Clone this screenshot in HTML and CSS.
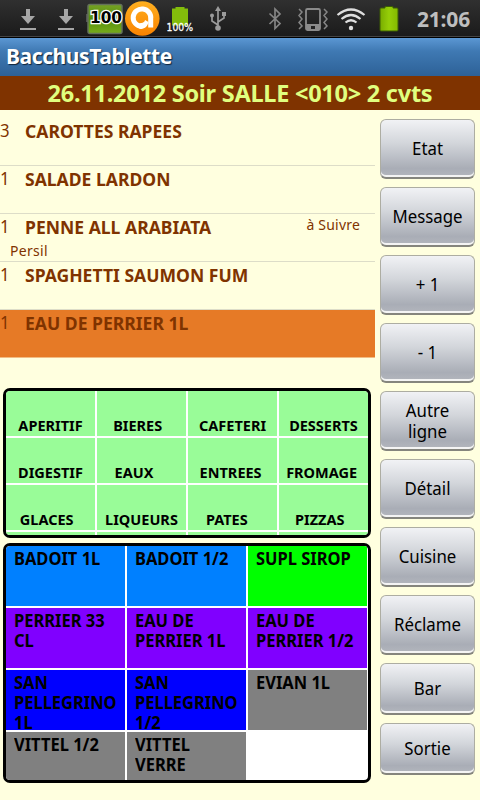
FILE: index.html
```
<!DOCTYPE html>
<html lang="fr">
<head>
    <meta charset="UTF-8">
    <meta name="viewport" content="width=device-width, initial-scale=1.0">
    <title>BacchusTablette</title>
    <link rel="stylesheet" href="styles.css">
</head>
<body>
    <div class="status-bar">
        <svg class="download-icon" width="38" height="36" viewBox="9 0 38 36">
            <path d="M26 9h4v7h5l-7 8-7-8h5z" fill="#a6a6a6"/>
            <path d="M20 28h16v2H20z" fill="#a6a6a6"/>
        </svg>
        <svg class="download-icon" width="38" height="36" viewBox="9 0 38 36">
            <path d="M26 9h4v7h5l-7 8-7-8h5z" fill="#a6a6a6"/>
            <path d="M20 28h16v2H20z" fill="#a6a6a6"/>
        </svg>
        <svg class="level-icon" width="38" height="36" viewBox="85 0 38 36">
            <defs>
                <linearGradient id="levelFill" x1="0" y1="0" x2="0" y2="1">
                    <stop offset="0" stop-color="#76a324"/>
                    <stop offset="0.5" stop-color="#558c0a"/>
                    <stop offset="1" stop-color="#78ac1c"/>
                </linearGradient>
            </defs>
            <path d="M86 14h2v8h-2z" fill="#555"/>
            <rect x="88" y="4.5" width="34" height="29" rx="2" fill="url(#levelFill)" stroke="#64715a" stroke-width="1.5"/>
            <text class="level-text" x="90" y="23" textLength="32" lengthAdjust="spacingAndGlyphs">100</text>
        </svg>
        <svg class="antivirus-icon" width="38" height="36" viewBox="123 0 38 36">
            <defs>
                <linearGradient id="orangeFill" x1="0" y1="0" x2="0" y2="1">
                    <stop offset="0" stop-color="#ffb020"/>
                    <stop offset="1" stop-color="#f98200"/>
                </linearGradient>
            </defs>
            <circle cx="142.3" cy="18.5" r="17.3" fill="url(#orangeFill)"/>
            <path d="M141.5 26.5A8.8 8.8 0 1 1 150.7 19v8.500" fill="none" stroke="#fff" stroke-width="5"/>
            <path d="M141.3 29a3 3 0 0 1 0-6c2-.2 3.5-1.3 3.7-3l3.5 2c-.8 4-3.5 6.700-7.2 7z" fill="#fff"/>
        </svg>
        <svg class="charge-icon" width="38" height="36" viewBox="161 0 38 36">
            <path d="M172 8.5h3.500V7h9v1.500h3.500v17h-16z" fill="#83bd0b"/>
            <text class="charge-text" x="166.5" y="31" textLength="26.5" lengthAdjust="spacingAndGlyphs">100%</text>
        </svg>
        <svg class="usb-icon" width="38" height="36" viewBox="199 0 38 36">
            <path d="M218 9v18M218 25l-6-4v-5M218 22l6-4v-4" fill="none" stroke="#9b9b9b" stroke-width="1.7"/>
            <path d="M218 6l3 5h-6z" fill="#9b9b9b"/>
            <circle cx="218" cy="28" r="2.8" fill="#9b9b9b"/>
            <circle cx="212" cy="15.5" r="2" fill="#9b9b9b"/>
            <path d="M222 12h4v4h-4z" fill="#9b9b9b"/>
        </svg>
        <span class="status-spacer"></span>
        <svg class="bluetooth-icon" width="32" height="36" viewBox="261 0 32 36">
            <path d="M269.5 13.5l10.5 10-5 5V9l5 5-10.5 10" fill="none" stroke="#858585" stroke-width="1.7"/>
        </svg>
        <svg class="vibrate-icon" width="42" height="36" viewBox="293 0 42 36">
            <rect x="306" y="9" width="14" height="21" rx="1.5" fill="none" stroke="#8b8b8b" stroke-width="1.8"/>
            <path d="M306 24h14v6h-14z" fill="#8b8b8b"/>
            <path d="M311 26h4v3h-4z" fill="#222"/>
            <path d="M299 9l3 3-3 3.5 3 3.5-3 3.5 3 3.5-3 3M324 9l3 3-3 3.5 3 3.5-3 3.5 3 3.5-3 3" fill="none" stroke="#858585" stroke-width="1.5"/>
        </svg>
        <svg class="wifi-icon" width="36" height="36" viewBox="335 0 36 36">
            <g fill="none" stroke="#dedede" stroke-width="2.2">
                <path d="M337.5 15q13.5-11 27 0"/>
                <path d="M341.5 19q9.5-8 19 0"/>
                <path d="M345.5 22.5q5.5-4.5 11 0"/>
            </g>
            <circle cx="351" cy="28" r="2.2" fill="#dedede"/>
        </svg>
        <svg class="battery-icon" width="38" height="36" viewBox="371 0 38 36">
            <defs>
                <linearGradient id="batteryFill" x1="0" y1="0" x2="1" y2="0">
                    <stop offset="0" stop-color="#79ad00"/>
                    <stop offset="0.5" stop-color="#96ce08"/>
                    <stop offset="1" stop-color="#83b900"/>
                </linearGradient>
            </defs>
            <path d="M381 8h4V6.500h8V8h4q1 0 1 1v21q0 1-1 1h-16q-1 0-1-1V9q0-1 1-1z" fill="url(#batteryFill)" stroke="#3c5c05" stroke-width="1"/>
        </svg>
        <span class="clock">21:06</span>
    </div>

    <header class="title-bar">
        <h1 class="app-title">BacchusTablette</h1>
    </header>
    <div class="table-banner">26.11.2012 Soir SALLE &lt;010&gt; 2 cvts</div>

    <main class="main-content">
        <section class="order-panel">
            <ul class="order-list">
                <li class="order-row">
                    <div class="order-line"><span class="order-qty">3</span><span class="order-name">CAROTTES RAPEES</span></div>
                </li>
                <li class="order-row">
                    <div class="order-line"><span class="order-qty">1</span><span class="order-name">SALADE LARDON</span></div>
                </li>
                <li class="order-row">
                    <div class="order-line"><span class="order-qty">1</span><span class="order-name">PENNE ALL ARABIATA</span><span class="order-status">à Suivre</span></div>
                    <div class="order-comment">Persil</div>
                </li>
                <li class="order-row">
                    <div class="order-line"><span class="order-qty">1</span><span class="order-name">SPAGHETTI SAUMON FUM</span></div>
                </li>
                <li class="order-row selected">
                    <div class="order-line"><span class="order-qty">1</span><span class="order-name">EAU DE PERRIER 1L</span></div>
                </li>
            </ul>

            <!-- family names are padded to 8 characters -->
            <div class="family-grid">
                <div class="family">APERITIF</div>
                <div class="family">BIERES&nbsp;&nbsp;</div>
                <div class="family">CAFETERI</div>
                <div class="family">DESSERTS</div>
                <div class="family">DIGESTIF</div>
                <div class="family">EAUX&nbsp;&nbsp;&nbsp;&nbsp;</div>
                <div class="family">ENTREES&nbsp;</div>
                <div class="family">FROMAGE&nbsp;</div>
                <div class="family">GLACES&nbsp;&nbsp;</div>
                <div class="family">LIQUEURS</div>
                <div class="family">PATES&nbsp;&nbsp;&nbsp;</div>
                <div class="family">PIZZAS&nbsp;&nbsp;</div>
                <div class="family"></div>
                <div class="family"></div>
                <div class="family"></div>
                <div class="family"></div>
            </div>

            <div class="item-grid">
                <div class="item azure"><span class="item-name">BADOIT 1L</span></div>
                <div class="item azure"><span class="item-name">BADOIT 1/2</span></div>
                <div class="item green"><span class="item-name">SUPL SIROP</span></div>
                <div class="item purple"><span class="item-name">PERRIER 33<br>CL</span></div>
                <div class="item purple"><span class="item-name">EAU DE<br>PERRIER 1L</span></div>
                <div class="item purple"><span class="item-name">EAU DE<br>PERRIER 1/2</span></div>
                <div class="item blue"><span class="item-name">SAN<br>PELLEGRINO<br>1L</span></div>
                <div class="item blue"><span class="item-name">SAN<br>PELLEGRINO<br>1/2</span></div>
                <div class="item gray"><span class="item-name">EVIAN 1L</span></div>
                <div class="item gray"><span class="item-name">VITTEL 1/2</span></div>
                <div class="item gray"><span class="item-name">VITTEL<br>VERRE</span></div>
            </div>
        </section>

        <nav class="actions">
            <button class="action-button"><span class="action-label">Etat</span></button>
            <button class="action-button"><span class="action-label">Message</span></button>
            <button class="action-button"><span class="action-label">+ 1</span></button>
            <button class="action-button"><span class="action-label">- 1</span></button>
            <button class="action-button"><span class="action-label">Autre<br>ligne</span></button>
            <button class="action-button"><span class="action-label">Détail</span></button>
            <button class="action-button"><span class="action-label">Cuisine</span></button>
            <button class="action-button"><span class="action-label">Réclame</span></button>
            <button class="action-button small"><span class="action-label">Bar</span></button>
            <button class="action-button small"><span class="action-label">Sortie</span></button>
        </nav>
    </main>
</body>
</html>
```
FILE: styles.css
```
* {
    margin: 0;
    padding: 0;
    box-sizing: border-box;
}

body {
    width: 480px;
    height: 800px;
    font-family: 'Noto Sans', 'Open Sans', sans-serif;
    background-color: #FFFFDF;
    color: #000;
    overflow: hidden;
}

.status-bar {
    height: 38px;
    display: flex;
    align-items: flex-start;
    padding: 0 9px;
    background: linear-gradient(#303030, #1a1a1a);
    border-bottom: 1px solid #000;
    box-shadow: inset 0 -1px 0 #444;
}

.status-bar svg {
    flex: none;
}

.level-text {
    font-family: 'DejaVu Sans', sans-serif;
    font-size: 15px;
    font-weight: bold;
    fill: #000;
    stroke: #fff;
    stroke-width: 2.5px;
    paint-order: stroke;
}

.charge-text {
    font-family: 'DejaVu Sans', sans-serif;
    font-size: 11px;
    fill: #fff;
    stroke: #fff;
    stroke-width: 0.3px;
}

.status-spacer {
    flex: 1;
}

.clock {
    width: 54px;
    margin-left: 8px;
    font-size: 21px;
    font-weight: bold;
    line-height: 39px;
    letter-spacing: -0.2px;
    color: #BEBEBE;
}

.title-bar {
    height: 38px;
    padding-left: 6px;
    background: linear-gradient(#5B97D3, #3F79B3 35%, #2D6197);
}

.app-title {
    font-size: 21px;
    font-weight: bold;
    line-height: 37px;
    letter-spacing: -0.4px;
    color: #fff;
    text-shadow: 1px 1px 1px #10243a;
}

.table-banner {
    height: 34px;
    font-size: 23.5px;
    font-weight: bold;
    line-height: 34px;
    letter-spacing: -0.25px;
    text-align: center;
    white-space: nowrap;
    background-color: #7F3300;
    color: #E0FF7F;
}

.main-content {
    display: flex;
    padding-top: 8px;
}

.order-panel {
    width: 375px;
}

.order-list {
    height: 270px;
    list-style: none;
    color: #7F3300;
}

.order-row {
    height: 48px;
    padding-top: 3px;
    border-bottom: 1px solid #DDDDC8;
}

.order-row.selected {
    background-color: #E67A26;
    border-bottom-color: #F2BC83;
}

.order-line {
    display: flex;
    height: 20px;
    line-height: 20px;
}

.order-qty {
    width: 25px;
    margin-top: -1px;
    font-size: 18px;
    transform: scaleX(0.93);
    transform-origin: left;
}

.order-name {
    font-size: 18px;
    font-weight: bold;
    white-space: nowrap;
    transform: scaleX(0.975);
    transform-origin: left;
}

.order-status {
    margin: -2px 15px 0 auto;
    font-size: 14px;
    letter-spacing: 0.2px;
}

.order-comment {
    margin: 6px 0 0 10px;
    font-size: 14px;
    line-height: 16px;
    letter-spacing: 0.3px;
}

.family-grid,
.item-grid {
    width: 368px;
    margin-left: 3px;
    display: grid;
    gap: 2px;
    background-color: #fff;
    border: 3px solid #000;
    border-radius: 7px;
    overflow: hidden;
}

.family-grid {
    height: 150px;
    grid-template-columns: repeat(4, 89px);
    grid-template-rows: repeat(3, 45px) 3px;
    margin-bottom: 5px;
}

.family {
    padding-top: 24px;
    font-size: 14.5px;
    font-weight: bold;
    line-height: 20px;
    text-align: center;
    white-space: nowrap;
    background-color: #99FC98;
}

.family:nth-child(n+13) {
    padding: 0;
}

.item-grid {
    height: 240px;
    grid-template-columns: repeat(3, 119px);
    grid-template-rows: repeat(3, 60px) 48px;
}

.item {
    padding: 2px 0 0 8px;
    font-size: 18px;
    font-weight: bold;
    line-height: 20px;
    white-space: nowrap;
    overflow: hidden;
}

/* condensed so that the long names fit their cell */
.item-name {
    display: block;
    transform: scaleX(0.915);
    transform-origin: left;
}

.azure { background-color: #0080FF; }
.green { background-color: #00FF00; }
.purple { background-color: #8000FF; }
.blue { background-color: #0000FF; }
.gray { background-color: #808080; }

.actions {
    display: flex;
    flex-direction: column;
    gap: 8px;
    width: 95px;
    margin-left: 5px;
    padding-top: 1px;
}

.action-button {
    height: 60px;
    padding-bottom: 2px;
    font-family: inherit;
    font-size: 18.5px;
    line-height: 21px;
    color: #000;
    background: linear-gradient(#F1F2F5, #D3D6DB 40%, #A9ADB6 85%, #B3B6BD);
    border: 1px solid #ADADA2;
    border-bottom: 2px solid #85857D;
    border-radius: 6px;
    box-shadow: inset 0 -2px 0 #F4F4F4;
}

.action-button.small {
    height: 52px;
}

.action-label {
    display: block;
    transform: scaleX(0.91);
}
```
